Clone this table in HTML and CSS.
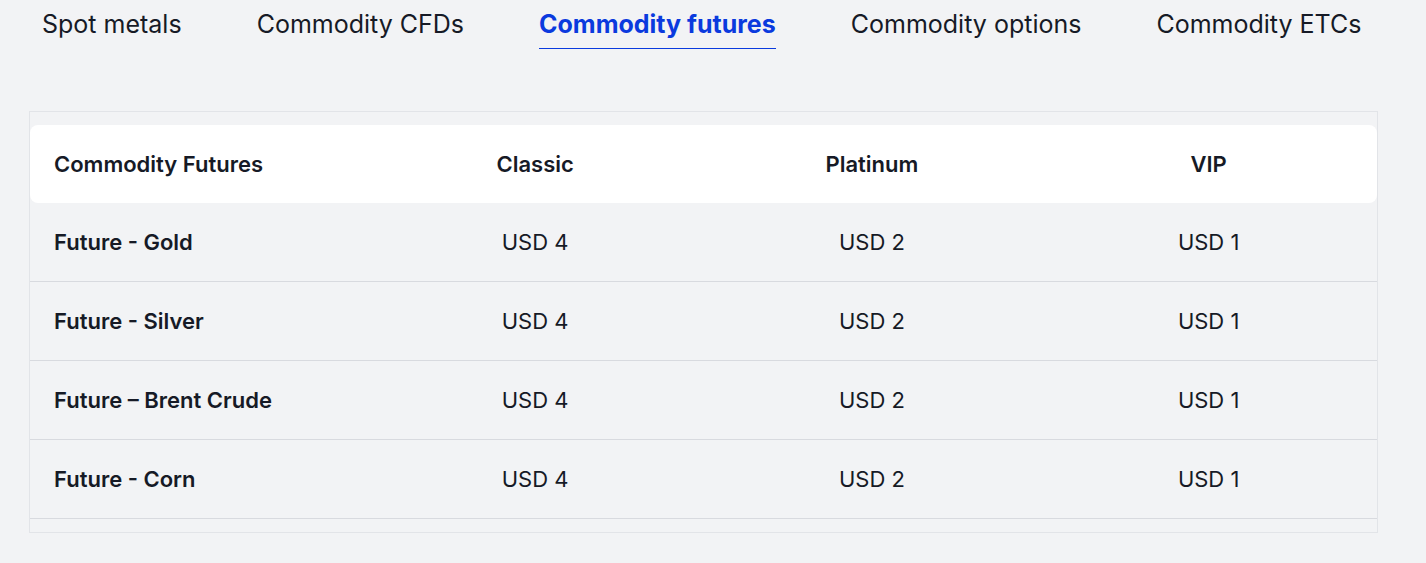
FILE: index.html
```html
<!DOCTYPE html>
<html lang="en">
<head>
<meta charset="utf-8">
<title>Commodity futures</title>
<link rel="stylesheet" href="styles.css">
</head>
<body>
<nav class="tabs">
  <a class="tab">Spot metals</a>
  <a class="tab">Commodity CFDs</a>
  <a class="tab active">Commodity futures</a>
  <a class="tab">Commodity options</a>
  <a class="tab">Commodity ETCs</a>
</nav>
<section class="panel">
  <div class="table">
    <div class="row head">
      <div class="cell name">Commodity Futures</div>
      <div class="cell">Classic</div>
      <div class="cell">Platinum</div>
      <div class="cell">VIP</div>
    </div>
    <div class="row">
      <div class="cell name">Future - Gold</div>
      <div class="cell">USD 4</div>
      <div class="cell">USD 2</div>
      <div class="cell">USD 1</div>
    </div>
    <div class="row">
      <div class="cell name">Future - Silver</div>
      <div class="cell">USD 4</div>
      <div class="cell">USD 2</div>
      <div class="cell">USD 1</div>
    </div>
    <div class="row">
      <div class="cell name">Future – Brent Crude</div>
      <div class="cell">USD 4</div>
      <div class="cell">USD 2</div>
      <div class="cell">USD 1</div>
    </div>
    <div class="row">
      <div class="cell name">Future - Corn</div>
      <div class="cell">USD 4</div>
      <div class="cell">USD 2</div>
      <div class="cell">USD 1</div>
    </div>
  </div>
</section>
</body>
</html>
```

FILE: styles.css
```css
html, body {
  margin: 0;
  padding: 0;
  background: #f2f3f5;
  font-family: Inter, "Noto Sans", sans-serif;
  color: #161a26;
}

.tabs {
  display: flex;
  gap: 75px;
  padding: 0 0 0 42px;
  height: 49px;
  align-items: flex-start;
}

.tab {
  font-size: 25px;
  line-height: 48px;
  border-bottom: 1px solid transparent;
  white-space: nowrap;
}

.tab.active {
  color: #0a3ade;
  font-weight: 700;
  border-bottom-color: #0a3ade;
}

.panel {
  margin: 62px 48px 0 29px;
  border: 1px solid #e2e4e8;
  padding: 13px 0 13px 0;
  width: 1347px;
}

.table {
  display: flex;
  flex-direction: column;
}

.row {
  display: grid;
  grid-template-columns: repeat(4, 1fr);
  height: 78px;
  align-items: center;
  border-bottom: 1px solid #d8dadf;
}

.row.head {
  background: #ffffff;
  border-radius: 8px;
  border-bottom: none;
}

.cell {
  font-size: 22px;
  text-align: center;
}

.head .cell {
  font-weight: 600;
}

.name {
  text-align: left;
  padding-left: 24px;
  font-weight: 600;
}
```
